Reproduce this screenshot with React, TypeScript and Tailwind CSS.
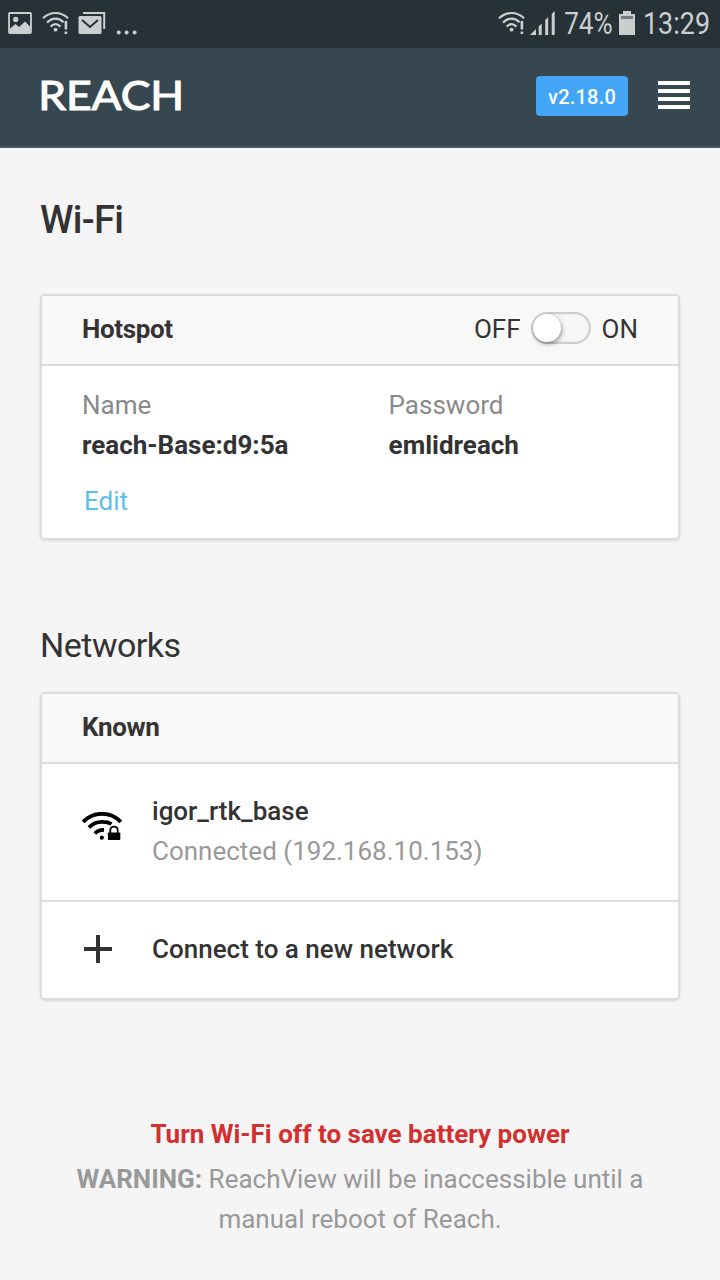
import type { ReactNode } from "react";

function WifiAlert() {
  return (
    <svg width="28" height="26" viewBox="0 0 28 26" fill="none" stroke="#cbcecf" strokeWidth="2.2">
      <path d="M1 7.2Q6.5 2 13.5 2T26 7.2" />
      <path d="M5 11.6Q9 7.6 13.5 7.6T21.5 11.2" />
      <path d="M8.6 15.6Q11 13.2 13.5 13.2T18.4 15.6" />
      <circle cx="13.5" cy="18.7" r="1.9" fill="#cbcecf" stroke="none" />
      <path d="M23.9 10V18.6M23.9 20.6V23" strokeWidth="2.6" />
    </svg>
  );
}

function StatusBar() {
  return (
    <header className="flex h-12 items-start bg-[#263238] text-[#cbcecf]">
      <svg className="mt-3 ml-2 shrink-0" width="24" height="22" viewBox="0 0 24 22">
        <rect x="1" y="1" width="22" height="20" rx="1" fill="none" stroke="#cbcecf" strokeWidth="1.8" />
        <circle cx="7.7" cy="7.4" r="2.6" fill="#cbcecf" />
        <path d="M2 16.5L7.5 12L11 15L17 9.5L22 14.5V20H2Z" fill="#cbcecf" />
      </svg>
      <div className="mt-[10.5px] ml-[10px] shrink-0"><WifiAlert /></div>
      <svg className="mt-3 ml-2 shrink-0" width="28" height="23" viewBox="0 0 28 23">
        <path d="M5 1H26.2V17" fill="none" stroke="#cbcecf" strokeWidth="2" />
        <rect x="0.5" y="4" width="23" height="18" rx="1.5" fill="#cbcecf" />
        <path d="M4 8L12 15L20 8" fill="none" stroke="#263238" strokeWidth="2" />
      </svg>
      <svg className="mt-[30px] ml-[10px] shrink-0" width="22" height="5" viewBox="0 0 22 5" fill="#cbcecf">
        <circle cx="2.7" cy="2.4" r="2" />
        <circle cx="10.6" cy="2.4" r="2" />
        <circle cx="18.6" cy="2.4" r="2" />
      </svg>
      <div className="flex-1" />
      <div className="mt-[10.5px] shrink-0"><WifiAlert /></div>
      <svg className="mt-[11px] ml-[4px] shrink-0" width="26" height="24" viewBox="0 0 26 24" fill="#cbcecf">
        <path d="M0 24L6 18V24Z" />
        <path d="M8.7 15.5L11.7 12.5V24H8.7Z" />
        <path d="M15.2 9L18.2 6V24H15.2Z" />
        <path d="M21.7 3L24.7 0V24H21.7Z" />
      </svg>
      <svg className="ml-[7px] shrink-0 overflow-visible" width="54" height="48" viewBox="0 0 54 48">
        <text x="1.2" y="34.4" textLength="48.5" lengthAdjust="spacingAndGlyphs" fill="#cbcecf" className="text-[31px]">74%</text>
      </svg>
      <svg className="mt-[11px] ml-[2px] shrink-0" width="16" height="24" viewBox="0 0 16 24">
        <path d="M4 0H12V3H16V24H0V3H4Z" fill="#cbcecf" />
        <rect x="2" y="5" width="12" height="3" fill="#727b7f" />
      </svg>
      <svg className="ml-[7px] shrink-0" width="78" height="48" viewBox="0 0 78 48">
        <text x="1" y="34.4" textLength="67" lengthAdjust="spacingAndGlyphs" fill="#cbcecf" className="text-[31px]">13:29</text>
      </svg>
    </header>
  );
}

function NavBar() {
  return (
    <nav className="flex h-[100px] items-start justify-between border-b-2 border-[#4b5a60] bg-[#37474f] pr-[30px] pl-[38px]">
      <svg width="155" height="80" viewBox="0 0 155 80">
        <text x="0.2" y="62.2" textLength="146" lengthAdjust="spacingAndGlyphs" fill="#fff" stroke="#fff" strokeWidth="1.1" className="font-['Lato',sans-serif] text-[40.5px] font-normal">REACH</text>
      </svg>
      <div className="mt-7 flex items-start gap-[30px]">
        <span className="flex h-10 w-[92px] items-center justify-center rounded bg-[#42a5f5] pt-0.5 text-[20px] font-medium tracking-[0.2px] text-white">v2.18.0</span>
        <span className="mt-[5px] flex flex-col gap-1">
          <i className="h-1 w-8 bg-white" />
          <i className="h-1 w-8 bg-white" />
          <i className="h-1 w-8 bg-white" />
          <i className="h-1 w-8 bg-white" />
        </span>
      </div>
    </nav>
  );
}

function Card({ title, action, children }: { title: string; action?: ReactNode; children: ReactNode }) {
  return (
    <section className="rounded-[5px] border-2 border-[#dcdcdc] bg-white shadow-[0_1px_3px_rgba(0,0,0,0.12)]">
      <div className="flex h-[70px] items-center justify-between rounded-t-[3px] border-b-2 border-[#dcdcdc] bg-[#f8f8f8] px-10 pb-0.5">
        <h3 className="font-bold tracking-[-0.38px]">{title}</h3>
        {action}
      </div>
      {children}
    </section>
  );
}

function HotspotToggle() {
  return (
    <div className="flex items-center">
      <span>OFF</span>
      <span className="mr-[11px] ml-[10px] -mt-0.5 h-8 w-[60px] rounded-full border-2 border-[#cdcdcd] bg-[#f7f7f7] shadow-[inset_0_0_3px_rgba(0,0,0,0.1)]">
        <span className="block size-7 rounded-full bg-white shadow-[1px_2px_4px_rgba(0,0,0,0.4)]" />
      </span>
      <span>ON</span>
    </div>
  );
}

function WifiLocked() {
  return (
    <svg width="40" height="30" viewBox="0 0 40 30" fill="none" stroke="#000">
      <path d="M1.2 9.8Q9 1.8 20 1.8T38.8 9.8" strokeWidth="3.8" />
      <path d="M7 15.6Q12 9.8 20 9.8Q26 9.8 29.5 12" strokeWidth="3.8" />
      <path d="M12.8 21.4Q16 17.8 22 17.8" strokeWidth="3.8" />
      <circle cx="19.8" cy="25.7" r="2.1" fill="#000" stroke="none" />
      <rect x="25.9" y="20.4" width="12.4" height="7.6" rx="0.8" fill="#000" stroke="none" />
      <path d="M28.3 21V18.3Q28.3 14.7 32 14.7T35.7 18.3V21" strokeWidth="1.8" />
    </svg>
  );
}

export default function App() {
  return (
    <div className="flex h-[1280px] w-[720px] flex-col overflow-hidden bg-[#f5f5f5] font-['Roboto',sans-serif] text-[26px] leading-10 text-[#333]">
      <StatusBar />
      <NavBar />
      <main className="flex flex-col px-10 pt-[47px]">
        <h1 className="mb-[49px] text-[38px] leading-[50px] font-medium tracking-[-0.7px]">Wi-Fi</h1>
        <Card title="Hotspot" action={<HotspotToggle />}>
          <div className="h-[172px] px-10 pt-[19px]">
            <div className="grid grid-cols-[306.6px_1fr]">
              <span className="text-[#8a8a8a]">Name</span>
              <span className="text-[#8a8a8a]">Password</span>
              <span className="font-bold">reach-Base:d9:5a</span>
              <span className="font-bold">emlidreach</span>
            </div>
            <a className="mt-4 ml-0.5 block text-[#5bbfec]">Edit</a>
          </div>
        </Card>
        <h2 className="mt-[80px] mb-[22px] text-[34px] leading-[50px] tracking-[-0.5px]">Networks</h2>
        <Card title="Known">
          <div className="flex h-[138px] items-center gap-[30px] border-b-2 border-[#dcdcdc] px-10 pb-0.5">
            <div className="-mt-2"><WifiLocked /></div>
            <div>
              <p className="font-medium">igor_rtk_base</p>
              <p className="text-[#999]">Connected (192.168.10.153)</p>
            </div>
          </div>
          <div className="flex h-24 items-center gap-10 px-10 pb-0.5">
            <svg className="ml-0.5" width="28" height="28" viewBox="0 0 28 28" stroke="#333" strokeWidth="4">
              <path d="M14 0V28M0 14H28" />
            </svg>
            <span className="font-medium">Connect to a new network</span>
          </div>
        </Card>
        <footer className="mt-[114px] text-center text-[#999]">
          <p className="mb-[5px] font-bold text-[#d32f2f]">Turn Wi-Fi off to save battery power</p>
          <p><b className="font-bold">WARNING:</b> ReachView will be inaccessible until a<br />manual reboot of Reach.</p>
        </footer>
      </main>
    </div>
  );
}
